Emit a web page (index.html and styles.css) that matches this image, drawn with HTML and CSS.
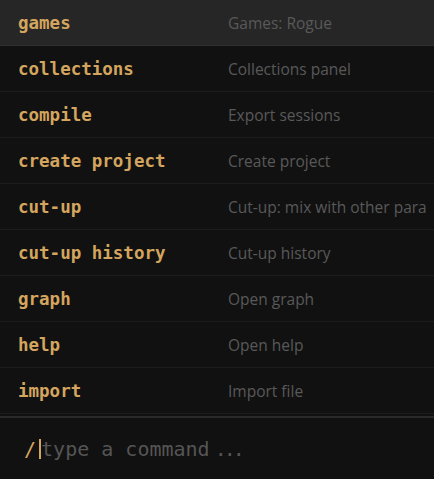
FILE: index.html
```html
<!DOCTYPE html>
<html lang="en">
<head>
    <meta charset="UTF-8">
    <meta name="viewport" content="width=device-width, initial-scale=1.0">
    <title>Command palette</title>
    <link rel="stylesheet" href="styles.css">
</head>
<body>
    <div class="palette">
        <ul class="commands">
            <li class="command active"><span class="name">games</span><span class="desc">Games: Rogue</span></li>
            <li class="command"><span class="name">collections</span><span class="desc">Collections panel</span></li>
            <li class="command"><span class="name">compile</span><span class="desc">Export sessions</span></li>
            <li class="command"><span class="name">create project</span><span class="desc">Create project</span></li>
            <li class="command"><span class="name">cut-up</span><span class="desc">Cut-up: mix with other para</span></li>
            <li class="command"><span class="name">cut-up history</span><span class="desc">Cut-up history</span></li>
            <li class="command"><span class="name">graph</span><span class="desc">Open graph</span></li>
            <li class="command"><span class="name">help</span><span class="desc">Open help</span></li>
            <li class="command"><span class="name">import</span><span class="desc">Import file</span></li>
        </ul>
        <div class="prompt">
            <span class="slash">/</span>
            <span class="caret"></span>
            <span class="placeholder">type a command</span>
            <span class="dots">...</span>
        </div>
    </div>
</body>
</html>
```

FILE: styles.css
```css
body {
    margin: 0;
    background: #111111;
    overflow: hidden;
}
.palette {
    width: 434px;
    height: 479px;
    background: #111111;
    display: flex;
    flex-direction: column;
}
.commands {
    list-style: none;
    margin: 0;
    padding: 0;
    height: 416px;
}
.command {
    display: flex;
    align-items: center;
    height: 45px;
    border-bottom: 1px solid #1c1c1c;
    white-space: nowrap;
    overflow: hidden;
}
.command.active {
    background: #262626;
    border-bottom-color: #303030;
}
.name {
    flex-shrink: 0;
    width: 210px;
    padding-left: 18px;
    font-family: "DejaVu Sans Mono", monospace;
    font-weight: bold;
    font-size: 17.5px;
    color: #d4a55e;
}
.desc {
    font-family: "Open Sans", sans-serif;
    font-size: 15.5px;
    color: #595959;
}
.prompt {
    flex: 1;
    display: flex;
    align-items: center;
    border-top: 2px solid #2a2a2a;
    padding-left: 24px;
    font-family: "DejaVu Sans Mono", monospace;
    font-size: 20px;
    white-space: pre;
    color: #555555;
}
.slash {
    color: #d4a55e;
    margin-right: 3px;
}
.caret {
    width: 2px;
    height: 20px;
    background: #d4a55e;
}
.dots {
    margin-left: 5px;
    letter-spacing: -3px;
}
```
